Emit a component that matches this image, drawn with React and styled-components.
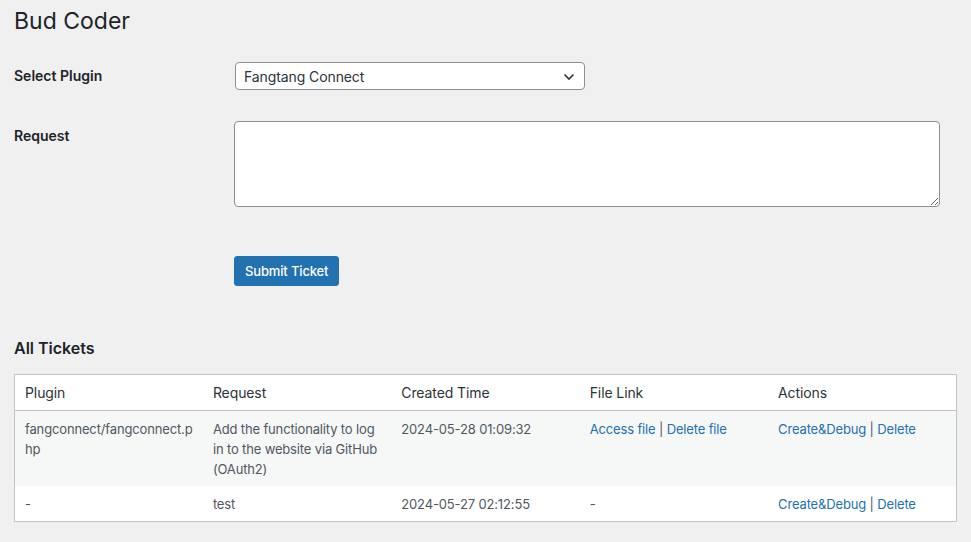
import React from 'react'
import styled, { createGlobalStyle } from 'styled-components'

const GlobalStyle = createGlobalStyle`
  html, body {
    margin: 0;
    padding: 0;
    background: #f0f0f1;
  }
  body {
    font-family: Inter, "Liberation Sans", sans-serif;
    color: #1d2327;
  }
`

const Wrap = styled.div`
  width: 971px;
  min-height: 542px;
  padding: 0 14px;
  box-sizing: border-box;
`

const Title = styled.h1`
  margin: 0;
  padding: 7px 0 0;
  font-size: 23px;
  font-weight: 400;
  line-height: 29px;
  color: #1d2327;
`

const Form = styled.div`
  display: grid;
  grid-template-columns: 220px 706px;
  margin-top: 11px;
`

const Label = styled.div`
  font-size: 14px;
  font-weight: 600;
  line-height: 18px;
  padding-top: ${p => p.top}px;
  color: #1d2327;
`

const Field = styled.div`
  padding: ${p => p.top}px 0 15px;
`

const SelectBox = styled.div`
  position: relative;
  width: 350px;
  height: 28px;
  margin-left: 1px;
  box-sizing: border-box;
  border: 1px solid #8c8f94;
  border-radius: 4px;
  background: #fff;
  display: flex;
  align-items: center;
  padding: 0 24px 0 8px;
  font-size: 14px;
  letter-spacing: -0.1px;
  color: #2c3338;
`

const Chevron = styled.svg`
  position: absolute;
  right: 9px;
  top: 9px;
`

const TextArea = styled.textarea`
  display: block;
  width: 706px;
  height: 86px;
  box-sizing: border-box;
  border: 1px solid #8c8f94;
  border-radius: 4px;
  background: #fff;
  margin: 0;
  font-family: inherit;
  font-size: 14px;
`

const Submit = styled.div`
  padding: 34px 0 0 220px;
`

const Button = styled.button`
  height: 30px;
  padding: 0 10px;
  border: 1px solid #2271b1;
  border-radius: 3px;
  background: #2271b1;
  color: #fff;
  font-family: inherit;
  font-size: 13px;
  font-weight: 500;
  letter-spacing: -0.15px;
  cursor: pointer;
`

const SectionTitle = styled.h2`
  margin: 52px 0 0;
  font-size: 16px;
  font-weight: 600;
  line-height: 20px;
  color: #1d2327;
`

const Table = styled.table`
  width: 943px;
  margin-top: 16px;
  border-collapse: collapse;
  table-layout: fixed;
  border: 1px solid #c3c4c7;
  background: #fff;
`

const HeadCell = styled.th`
  text-align: left;
  font-weight: 400;
  font-size: 14px;
  line-height: 20px;
  padding: 8px 10px 7px;
  letter-spacing: -0.1px;
  color: #2c3338;
  border-bottom: 1px solid #c3c4c7;
`

const Row = styled.tr`
  background: ${p => (p.striped ? '#f6f7f7' : '#fff')};
`

const Cell = styled.td`
  vertical-align: top;
  font-size: 13px;
  line-height: 20px;
  padding: 8px 10px 7px;
  letter-spacing: -0.15px;
  color: #50575e;
  word-break: ${p => (p.breakAll ? 'break-all' : 'normal')};
`

const Link = styled.a`
  color: #2271b1;
  text-decoration: none;
`

const tickets = [
  {
    plugin: 'fangconnect/fangconnect.php',
    request: 'Add the functionality to log in to the website via GitHub (OAuth2)',
    created: '2024-05-28 01:09:32',
    hasFile: true,
  },
  {
    plugin: '-',
    request: 'test',
    created: '2024-05-27 02:12:55',
    hasFile: false,
  },
]

const App = () => {
  return (
    <Wrap>
      <GlobalStyle />
      <Title>Bud Coder</Title>

      <Form>
        <Label top={20}>Select Plugin</Label>
        <Field top={15}>
          <SelectBox>
            Fangtang Connect
            <Chevron width="12" height="9" viewBox="0 0 12 9">
              <path d="M1.5 2.5 L6 7 L10.5 2.5" fill="none" stroke="#2c3338" strokeWidth="1.6" />
            </Chevron>
          </SelectBox>
        </Field>

        <Label top={22}>Request</Label>
        <Field top={16}>
          <TextArea />
        </Field>
      </Form>

      <Submit>
        <Button>Submit Ticket</Button>
      </Submit>

      <SectionTitle>All Tickets</SectionTitle>

      <Table>
        <thead>
          <tr>
            <HeadCell>Plugin</HeadCell>
            <HeadCell>Request</HeadCell>
            <HeadCell>Created Time</HeadCell>
            <HeadCell>File Link</HeadCell>
            <HeadCell>Actions</HeadCell>
          </tr>
        </thead>
        <tbody>
          {tickets.map((t, i) => (
            <Row key={i} striped={i % 2 === 0}>
              <Cell breakAll>{t.plugin}</Cell>
              <Cell>{t.request}</Cell>
              <Cell>{t.created}</Cell>
              <Cell>
                {t.hasFile ? (
                  <>
                    <Link href="#">Access file</Link> | <Link href="#">Delete file</Link>
                  </>
                ) : (
                  '-'
                )}
              </Cell>
              <Cell>
                <Link href="#">Create&amp;Debug</Link> | <Link href="#">Delete</Link>
              </Cell>
            </Row>
          ))}
        </tbody>
      </Table>
    </Wrap>
  )
}

export default App
